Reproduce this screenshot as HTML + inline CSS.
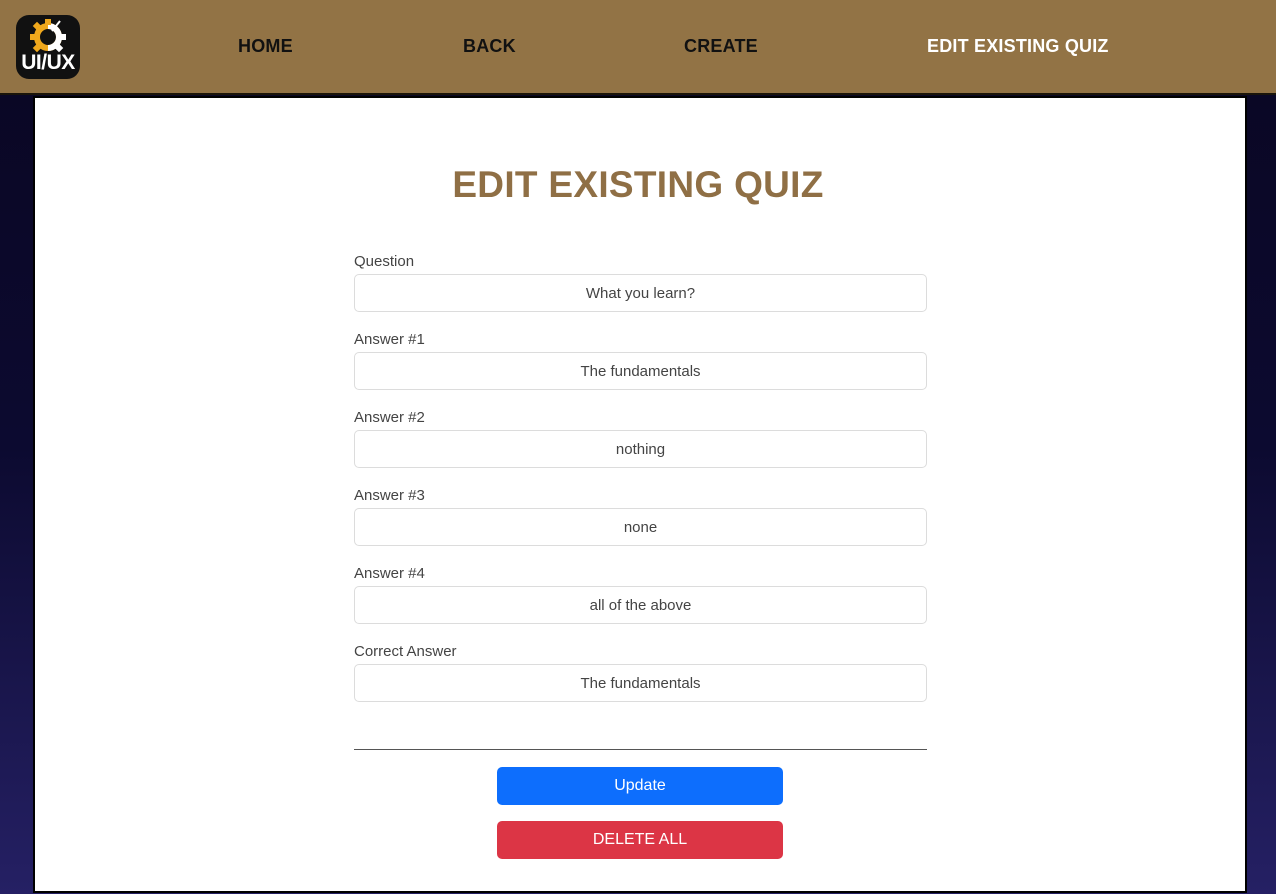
<!DOCTYPE html>
<html><head><meta charset="utf-8"><style>
*{box-sizing:border-box;margin:0;padding:0}
body{width:1276px;height:894px;overflow:hidden;font-family:"Liberation Sans",sans-serif;background:linear-gradient(180deg,#0a0622 0%,#0c0a30 50%,#252064 100%);position:relative}
.hdr{position:absolute;left:0;top:0;width:1276px;height:95px;background:#927345;border-bottom:2px solid #1a140a}
.logo{position:absolute;left:16px;top:15px;width:64px;height:64px;background:#111;border-radius:13px;overflow:hidden}
.logo .t{position:absolute;left:0;right:0;top:37px;text-align:center;color:#fff;font-weight:bold;font-size:21px;letter-spacing:-0.5px;line-height:22px}
.nav{position:absolute;top:36px;font-weight:bold;font-size:18px;color:#111;letter-spacing:0.2px}
.panel{position:absolute;left:33px;top:96px;width:1214px;height:797px;background:#000}
.inner{position:absolute;left:35px;top:98px;width:1210px;height:793px;background:#fff}
h1{position:absolute;left:0;width:1276px;top:164px;text-align:center;color:#8f6f45;font-size:37px;font-weight:bold;letter-spacing:0.3px}
.lbl{position:absolute;left:354px;font-size:15px;color:#444}
.inp{position:absolute;left:354px;width:573px;height:38px;border:1px solid #dcdcdc;border-radius:5px;text-align:center;line-height:38px;font-size:15px;color:#444}
.hr{position:absolute;left:354px;top:749px;width:573px;height:1px;background:#555}
.btn{position:absolute;left:497px;width:286px;height:38px;border-radius:5px;color:#fff;text-align:center;line-height:38px;font-size:16px}
</style></head><body>
<div class="hdr">
<div class="logo">
<svg width="64" height="40" viewBox="0 0 64 40" style="position:absolute;left:0;top:0">
<g transform="translate(32,22)">
<circle r="11" fill="none" stroke="#f0a81c" stroke-width="6"/>
<path d="M0,-11 A11,11 0 0 1 0,11" fill="none" stroke="#fff" stroke-width="6"/>
<g fill="#f0a81c"><rect x="-3" y="-18" width="6" height="6"/><rect x="-18" y="-3" width="6" height="6"/><rect x="-14" y="-14" width="6" height="6" transform="rotate(45 -11 -11)"/><rect x="-14" y="8" width="6" height="6" transform="rotate(45 -11 11)"/></g>
<g fill="#fff"><rect x="12" y="-3" width="6" height="6"/><rect x="8" y="8" width="6" height="6" transform="rotate(45 11 11)"/></g>
<circle r="6" fill="#111"/>
<path d="M4,-6 L12,-16" stroke="#fff" stroke-width="2"/>
</g></svg>
<div class="t">UI/UX</div></div>
<div class="nav" style="left:238px">HOME</div>
<div class="nav" style="left:463px">BACK</div>
<div class="nav" style="left:684px">CREATE</div>
<div class="nav" style="left:927px;color:#fff">EDIT EXISTING QUIZ</div>
</div>
<div class="panel"></div>
<div class="inner"></div>
<h1>EDIT EXISTING QUIZ</h1>
<div class="lbl" style="top:253px">Question</div><div class="inp" style="top:274px">What you learn?</div>
<div class="lbl" style="top:331px">Answer #1</div><div class="inp" style="top:352px">The fundamentals</div>
<div class="lbl" style="top:409px">Answer #2</div><div class="inp" style="top:430px">nothing</div>
<div class="lbl" style="top:487px">Answer #3</div><div class="inp" style="top:508px">none</div>
<div class="lbl" style="top:565px">Answer #4</div><div class="inp" style="top:586px">all of the above</div>
<div class="lbl" style="top:643px">Correct Answer</div><div class="inp" style="top:664px">The fundamentals</div>
<div class="hr"></div>
<div class="btn" style="top:767px;background:#0d6efd">Update</div>
<div class="btn" style="top:821px;background:#dc3545">DELETE ALL</div>
</body></html>
